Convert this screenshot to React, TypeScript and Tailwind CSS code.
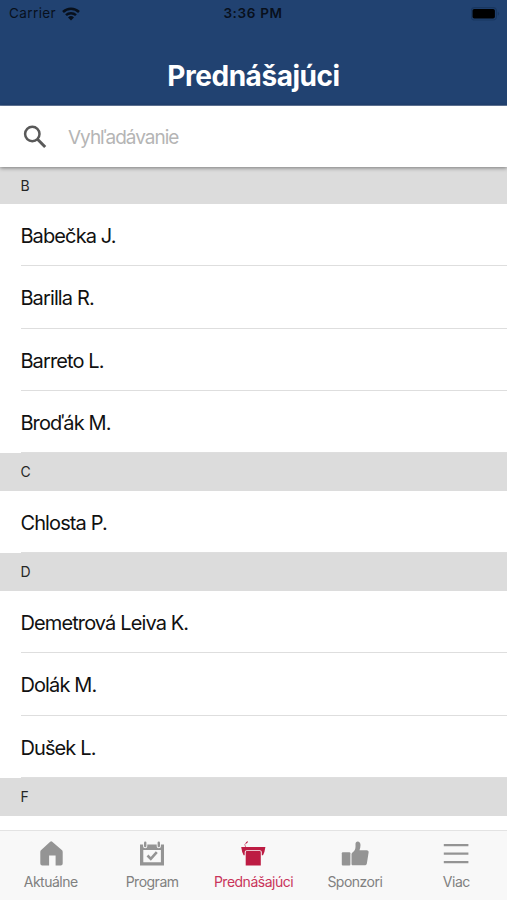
import type { ReactNode } from 'react'

const SECTIONS = [
  { letter: 'B', names: ['Babečka J.', 'Barilla R.', 'Barreto L.', 'Broďák M.'] },
  { letter: 'C', names: ['Chlosta P.'] },
  { letter: 'D', names: ['Demetrová Leiva K.', 'Dolák M.', 'Dušek L.'] },
  { letter: 'F', names: [] },
]

const TABS: { label: string; icon: ReactNode; active?: boolean }[] = [
  {
    label: 'Aktuálne',
    icon: (
      <path d="M12.2 1.7a1.6 1.6 0 0 1 2 0l9.6 8.3c.6.5.9 1.1.9 1.9v11.6a2 2 0 0 1-2 2h-5.1v-9.9h-6.5v9.9H4.3a2 2 0 0 1-2-2V11.9c0-.8.3-1.4.9-1.9z" />
    ),
  },
  {
    label: 'Program',
    icon: (
      <>
        <path
          fillRule="evenodd"
          d="M1 4.6h3.1v1.6a2.1 2.1 0 0 0 4.2 0V4.6h9.4v1.6a2.1 2.1 0 0 0 4.2 0V4.6H25v20.9H1zm3.3 5.4v12.3h17.6V10z"
        />
        <rect x="5" y="1.5" width="2.4" height="5.8" rx="1.2" />
        <rect x="18.6" y="1.5" width="2.4" height="5.8" rx="1.2" />
        <path d="m8.5 15.5 3.3 3.4 6-6.7" fill="none" stroke="currentColor" strokeWidth="2.6" />
      </>
    ),
  },
  {
    label: 'Prednášajúci',
    active: true,
    icon: (
      <>
        <path d="M1.2 7.1h24.2l-1 4.8-1.4 3.3h-1.2v-2.7c0-1.5-.8-2.3-2.2-2.3H6.9c-1.4 0-2.2.8-2.2 2.3v2.7H3.6l-1.4-3.3z" />
        <path d="M7 11.1h12.5c.8 0 1.3.5 1.3 1.3v13.1H5.7V12.4c0-.8.5-1.3 1.3-1.3z" />
        <path d="M5.7 7.2 4.8 4.6l2-2.6" fill="none" stroke="currentColor" strokeWidth=".6" />
        <ellipse cx="6.9" cy="2.4" rx="1.3" ry=".6" transform="rotate(-45 6.9 2.4)" />
      </>
    ),
  },
  {
    label: 'Sponzori',
    icon: (
      <>
        <rect x="-.2" y="12.2" width="8.6" height="13.2" rx="1" />
        <path d="M9.5 14.2c0-.7.2-1.1.7-1.5 2.2-1.5 3.2-3.2 3.3-5.7V3.8c0-1.5.9-2.4 2.2-2.4 1.6 0 2.8 1.4 2.8 3.5 0 2-.4 3.7-1 5.4h7.1c1.5 0 2.2.9 2 2.3l-1.7 10.6c-.2 1.4-1 2.1-2.4 2.1H11c-1 0-1.5-.5-1.5-1.5z" />
      </>
    ),
  },
  {
    label: 'Viac',
    icon: <path d="M.8 5.1h24.6M.8 13.6h24.6M.8 22.2h24.6" fill="none" stroke="currentColor" strokeWidth="2.3" />,
  },
]

function StatusBar() {
  return (
    <div className="grid grid-cols-3 items-center h-[27px] px-[9px] text-[13.5px] text-[#08101c]">
      <div className="flex items-center gap-[6px]">
        <span className="tracking-[0.4px]">Carrier</span>
        <svg width="18" height="14" viewBox="0 0 18 14" fill="none" stroke="currentColor" strokeWidth="2.5">
          <path d="M1 5a11.5 11.5 0 0 1 16 0" />
          <path d="M4 8.2a7.3 7.3 0 0 1 10 0" />
          <path d="M9 13.5 6 10.5a4.3 4.3 0 0 1 6 0z" fill="currentColor" stroke="none" />
        </svg>
      </div>
      <span className="text-center font-semibold tracking-[0.65px] -indent-px">3:36 PM</span>
      <svg className="justify-self-end -mr-[2px]" width="29" height="14" viewBox="0 0 29 14">
        <rect x=".2" y=".6" width="25.2" height="12.4" rx="3.5" fill="none" stroke="#193760" strokeWidth="1.2" />
        <rect x="1.5" y="2" width="22.4" height="9.6" rx="1.8" fill="#000" />
        <path d="M26.8 4.8v4a2.2 2.2 0 0 0 0-4z" fill="#193760" />
      </svg>
    </div>
  )
}

export default function App() {
  return (
    <div className="flex flex-col h-[900px] w-full overflow-hidden bg-white font-['Inter','Liberation_Sans',sans-serif]">
      <header className="h-[106px] shrink-0 bg-[#214271] border-b border-[#667da0]">
        <StatusBar />
        <h1 className="pt-[31px] text-center text-[28px] leading-9 font-bold tracking-[-0.45px] text-white">
          Prednášajúci
        </h1>
      </header>

      {/* Search */}
      <div className="relative z-10 flex items-center h-[60.5px] shrink-0 pl-[23px] pt-[2px] bg-white shadow-[0_1px_4px_rgba(0,0,0,0.45)]">
        <svg width="24" height="24" viewBox="0 0 24 24" fill="none" stroke="#595959" strokeWidth="2.5">
          <circle cx="9.3" cy="9" r="7.2" />
          <path d="m14.5 14.2 7.7 7.8" strokeWidth="3" />
        </svg>
        <input
          placeholder="Vyhľadávanie"
          className="ml-[21px] mt-[2px] w-[300px] text-[19px] tracking-[-1px] outline-none placeholder:text-[#b5b5b5]"
        />
      </div>

      {/* Speakers */}
      <main className="flex-1 min-h-0 overflow-hidden">
        {SECTIONS.map(section => (
          <section key={section.letter}>
            <h2 className="flex items-center h-[37.6px] pb-[0.6px] pl-[20.5px] bg-[#dcdcdc] text-[14px] text-[#262626]">
              {section.letter}
            </h2>
            <ul className="pl-[21px]">
              {section.names.map(name => (
                <li
                  key={name}
                  className="flex items-center h-[62.35px] pt-[2.6px] -indent-[0.6px] border-b border-[#dedede] text-[20px] tracking-[-0.88px] text-[#111]"
                >
                  {name}
                </li>
              ))}
            </ul>
          </section>
        ))}
      </main>

      <nav className="grid grid-cols-5 h-[70px] shrink-0 bg-[#f8f8f8] border-t border-[#e3e3e3]">
        {TABS.map(tab => (
          <div
            key={tab.label}
            className={`flex flex-col items-center pt-[9px] ${tab.active ? 'text-[#bd1c43]' : 'text-[#949494]'}`}
          >
            <svg width="26" height="26" viewBox="0 0 26 26" fill="currentColor" className="overflow-visible">
              {tab.icon}
            </svg>
            <span
              className={`mt-[6px] text-[14px] leading-5 tracking-[-0.5px] ${tab.active ? 'text-[#c9355b]' : 'text-[#808080]'}`}
            >
              {tab.label}
            </span>
          </div>
        ))}
      </nav>
    </div>
  )
}
